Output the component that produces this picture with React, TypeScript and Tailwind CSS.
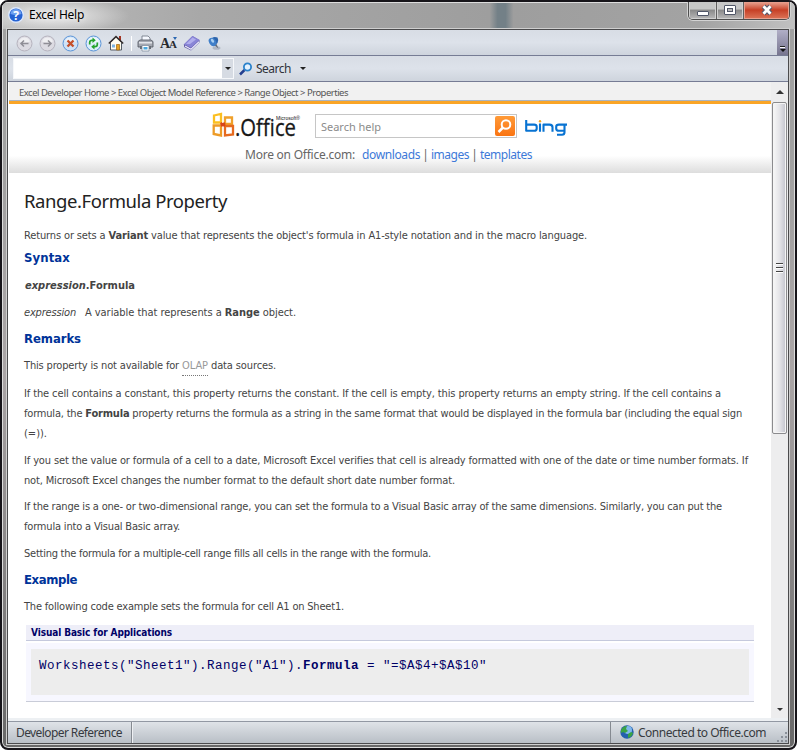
import { useLayoutEffect, useRef, useState, type ReactNode } from "react";

const tahoma = "font-['DejaVu_Sans_Condensed','DejaVu_Sans',sans-serif] [font-stretch:condensed]";
const segoe = "font-['Noto_Sans','Open_Sans',sans-serif]";

/** One line of text, tracked so that it fills exactly `w` pixels. */
function Fit({ w, children, className = "" }: { w: number; children: ReactNode; className?: string }) {
  const ref = useRef<HTMLSpanElement>(null);
  const [gap, setGap] = useState(0);
  useLayoutEffect(() => {
    const el = ref.current;
    if (!el) return;
    const n = (el.textContent ?? "").length;
    setGap((w - el.getBoundingClientRect().width) / n);
  }, [w]);
  return (
    <span ref={ref} className={`inline-block whitespace-pre ${className}`} style={{ letterSpacing: `${gap}px` }}>
      {children}
    </span>
  );
}

function Round({ fill, edge, children }: { fill: string; edge: string; children: ReactNode }) {
  return (
    <svg width="17" height="17" viewBox="0 0 17 17" className="shrink-0">
      <circle cx="8.5" cy="8.5" r="7.5" fill={fill} stroke={edge} />
      <path d="M3 6.5a5.8 5.8 0 0 1 11 0Q8.500 9 3 6.500Z" fill="#fff" opacity=".55" />
      {children}
    </svg>
  );
}

function ToolIcons() {
  return (
    <div className="flex items-center pt-px pl-[8px]">
      <div className="flex gap-[6px]">
        <Round fill="#dcdbe2" edge="#b5b2bd">
          <path d="M12.500 8.500H5M8 5.500l-3 3 3 3" fill="none" stroke="#8f8e96" strokeWidth="1.500" />
        </Round>
        <Round fill="#dcdbe2" edge="#b5b2bd">
          <path d="M4.500 8.500H12M9 5.500l3 3-3 3" fill="none" stroke="#8f8e96" strokeWidth="1.500" />
        </Round>
        <Round fill="#cfe2f7" edge="#5a93d6">
          <path d="M5.500 5.500l6 6M11.500 5.500l-6 6" stroke="#c4502c" strokeWidth="2.400" />
        </Round>
        <Round fill="#dceefb" edge="#5a93d6">
          <path d="M4.700 9.500V7.500Q4.700 5.300 7 5.300h1M12.300 7.500v2q0 2.200-2.300 2.200H9" fill="none" stroke="#25a32c" strokeWidth="1.700" />
          <path d="M7.500 2.500L10.800 5.300 7.500 8ZM9.500 9L6.200 11.700l3.300 2.800Z" fill="#25a32c" />
        </Round>
      </div>
      <svg width="16" height="16" viewBox="0 0 16 16" className="ml-[6px]">
        <path d="M11 1h2v5h-2z" fill="#a33322" />
        <path d="M2.500 7.500L8 2.200l5.500 5.300V15h-11z" fill="#fffdf1" stroke="#555d66" />
        <path d="M8.500 9.500h3V15h-3z" fill="#e7a423" stroke="#9d6412" strokeWidth=".7" />
        <path d="M4 9.500h3v3H4z" fill="#7cb4e4" />
        <path d="M.8 8.500L8 1.500l7.200 7" fill="none" stroke="#302b2b" strokeWidth="1.500" />
      </svg>
      <div className="ml-[7px] h-[15px] w-px bg-white" />
      <svg width="17" height="17" viewBox="0 0 17 17" className="ml-[5px]">
        <path d="M5 1h6l2 2v5H5z" fill="#f6f9ff" stroke="#69717e" strokeWidth=".8" />
        <path d="M1 6.500L3 5h11l2 1.500V12H1z" fill="#a5a9b2" stroke="#4b505a" strokeWidth=".8" />
        <path d="M2 7h13v1.500H2z" fill="#e3e5ea" />
        <path d="M3 11h11v3H3z" fill="#686d76" />
        <path d="M5 10.500h7V16H5z" fill="#fff" stroke="#778596" strokeWidth=".7" />
        <path d="M6.500 12h4v2.500h-4z" fill="#49a8df" />
      </svg>
      <div className="ml-[6px] flex h-[17px] w-[17px] items-baseline leading-[17px] font-bold text-[#282a2f]">
        <span className="w-[9px] font-['Liberation_Serif',serif] text-[14px] tracking-[-1px]">A</span>
        <span className="font-['Liberation_Serif',serif] text-[11px]">A</span>
        <div className="mt-[2px] -ml-[4px] self-start border-x-[2.5px] border-t-[3px] border-x-transparent border-t-[#2c68b2]" />
      </div>
      <svg width="17" height="17" viewBox="0 0 17 17" className="ml-[6px]">
        <path d="M1 9.500L9.500 1l7 4v2.500L8 15.500 1 12z" fill="#635caa" />
        <path d="M2 11l6 3.200 8-7.500" fill="none" stroke="#ecebfa" strokeWidth="1.200" />
        <path d="M1 9.300L9.500 1l7 4L8 12.800z" fill="#8985d6" />
        <path d="M3 9L9.500 2.500 13 4.500 7 9z" fill="#b1aeed" />
      </svg>
      <svg width="14" height="15" viewBox="0 0 14 15" className="ml-[7px]">
        <ellipse cx="9.500" cy="12" rx="4" ry="1.800" fill="#8b93a5" opacity=".5" />
        <path d="M7 9l4.500 3.500L9.500 8z" fill="#656c79" />
        <path d="M5 2Q7 .5 10.500 1.500 12 4 10.500 7L7 10z" fill="#2d65ad" />
        <ellipse cx="5.500" cy="6" rx="3.300" ry="4.500" fill="#407fc9" transform="rotate(-35 5.500 6)" />
        <ellipse cx="5.500" cy="4.800" rx="1.300" ry="2.200" fill="#abd0f1" transform="rotate(-35 5.500 4.800)" />
      </svg>
    </div>
  );
}

function OfficeLogo() {
  return (
    <div className="flex h-[28px] w-[88px]">
      <svg width="88" height="28" viewBox="0 0 88 28" className="overflow-visible">
        <g fill="none" strokeWidth="2.300">
          <path d="M2 3.500l7-1.500v8.500H2z" stroke="#fbbf20" />
          <path d="M13 5.500h7v6.500h-7z" stroke="#f0a02a" />
          <path d="M5 13.500H1.700v8.500l7.300 1.500v-10H5" stroke="#ed9b27" />
          <path d="M13 14h8v8.500l-8 1z" stroke="#e66a1f" />
          <path d="M8.500 11l4.500 3M9 14l4-3" stroke="#d84618" />
        </g>
        <text x="23" y="24" textLength="61" lengthAdjust="spacingAndGlyphs" fontFamily="Open Sans" fontSize="24" fill="#171717" stroke="#171717" strokeWidth=".3">.Office</text>
        <text x="64" y="7.500" textLength="24" lengthAdjust="spacingAndGlyphs" fontFamily="Liberation Sans" fontSize="6" fill="#111">Microsoft®</text>
      </svg>
    </div>
  );
}

function BingLogo() {
  return (
    <svg width="43" height="16" viewBox="0 0 43 16" className="mt-[4px] ml-[8px]">
      <g fill="none" stroke="#0873d2" strokeWidth="2.100" strokeLinejoin="round">
        <path d="M1.200 0v10.800h8q2.500 0 2.500-2.300V6.800Q11.700 4.600 9.200 4.600H2" />
        <path d="M15 3.500v8.300" />
        <path d="M18.500 11.800V4.600h6q3 0 3 2.600v4.600" />
        <path d="M42 4.600h-8q-2.800 0-2.800 2.200v1.700q0 2.300 2.800 2.300H39.500V4.800v7.500q0 2.500-2.500 2.500h-5" />
      </g>
      <circle cx="15" cy="1.300" r="1.200" fill="#f5a623" />
    </svg>
  );
}

function Thumb() {
  return (
    <div className="flex h-[332px] w-[15px] flex-col items-center justify-center gap-[2px] rounded-[2px] border border-[#8b8b8e] bg-linear-to-r from-[#f8f8f8] via-[#e4e4e8] to-[#c3c4cd] shadow-[inset_0_0_0_1px_#f5f5f5]">
      <div className="h-[2px] w-[7px] border-t border-[#444] bg-white" />
      <div className="h-[2px] w-[7px] border-t border-[#444] bg-white" />
      <div className="h-[2px] w-[7px] border-t border-[#444] bg-white" />
    </div>
  );
}

function TitleBar() {
  return (
    <div className="relative flex h-[27px] items-start bg-[radial-gradient(ellipse_75px_18px_at_52px_14px,#e2e2e2_20%,transparent_100%)]">
      <svg width="16" height="16" viewBox="0 0 16 16" className="mt-[5px] ml-[6px]">
        <circle cx="8" cy="8" r="7.300" fill="#2562d2" stroke="#dce7fa" strokeWidth="1.400" />
        <path d="M2.500 7a5.500 5 0 0 1 11 0Q8 9 2.500 7Z" fill="#6ea0f1" />
        <text x="8" y="12.500" textAnchor="middle" fontFamily="Open Sans" fontWeight="700" fontSize="12" fill="#fff">?</text>
      </svg>
      <div className={`${segoe} mt-[4px] ml-[5px] text-[12px] leading-[18px] text-black [text-shadow:0_0_7px_#fff]`}>
        <Fit w={55}>Excel Help</Fit>
      </div>
      <div className="absolute top-[-1px] right-[5px] flex h-[19px] w-[102px] overflow-hidden rounded-b-[5px] border border-t-0 border-[#4e4e4e] shadow-[0_0_0_1px_#d3d3d3]">
        <div className="flex w-[28px] items-center justify-center border-r border-[#606060] bg-linear-to-b from-[#c7c7c7] from-45% via-[#898989] via-50% to-[#b9b9b9] shadow-[inset_0_0_0_1px_#d0d0d0]">
          <div className="mt-[6px] h-[5px] w-[12px] rounded-[1px] border border-[#515768] bg-white" />
        </div>
        <div className="flex w-[27px] items-center justify-center border-r border-[#606060] bg-linear-to-b from-[#c7c7c7] from-45% via-[#898989] via-50% to-[#b9b9b9] shadow-[inset_0_0_0_1px_#d0d0d0]">
          <div className="flex h-[10px] w-[12px] items-center justify-center rounded-[1px] border border-[#515768] bg-white">
            <div className="h-[4px] w-[6px] border border-[#515768] bg-[#bbb]" />
          </div>
        </div>
        <div className="flex flex-1 items-center justify-center bg-linear-to-b from-[#e7a493] from-5% via-[#c63f25] via-50% to-[#dc7458] shadow-[inset_0_0_0_1px_#e7a18f]">
          <svg width="14" height="12" viewBox="0 0 14 12">
            <path d="M3.500 2.200l7 7.600M10.500 2.200l-7 7.600" stroke="#555b6e" strokeWidth="5" />
            <path d="M3.500 2.200l7 7.600M10.500 2.200l-7 7.600" stroke="#fff" strokeWidth="2.800" />
          </svg>
        </div>
      </div>
    </div>
  );
}

function Toolbar() {
  const bar = "bg-linear-to-b from-[#d8dde5] via-[#dde2ea] to-[#ced4dd] border-b border-[#767c94]";
  return (
    <>
      <div className={`flex h-[26px] justify-between ${bar}`}>
        <ToolIcons />
        <div className="flex w-[11px] flex-col items-center justify-end bg-linear-to-b from-[#b1afc7] to-[#77758f] pb-[3px]">
          <div className="h-[2px] w-[5px] border-b border-white bg-[#222]" />
          <div className="mt-px border-x-[3px] border-t-[3px] border-x-transparent border-t-[#111]" />
        </div>
      </div>
      <div className={`flex h-[26px] items-center pl-[5px] ${bar}`}>
        <div className="flex h-[21px] w-[221px] justify-end border border-[#f5f7fa] bg-white">
          <div className="flex w-[11px] items-center justify-center bg-[#d6dbe3]">
            <div className="border-x-[3px] border-t-[3px] border-x-transparent border-t-[#222]" />
          </div>
        </div>
        <svg width="14" height="14" viewBox="0 0 14 14" className="ml-[5px]">
          <path d="M5.500 8L1 12.500" stroke="#233f8f" strokeWidth="2.500" />
          <circle cx="8.500" cy="5" r="3.600" fill="#e4f2ff" stroke="#2b82cb" strokeWidth="1.800" />
        </svg>
        <div className={`${segoe} ml-[3px] text-[12px] leading-[18px] text-[#30333a]`}>
          <Fit w={35}>Search</Fit>
        </div>
        <div className="ml-[9px] border-x-[3px] border-t-[3px] border-x-transparent border-t-[#222]" />
      </div>
    </>
  );
}

function PageHeader() {
  return (
    <>
      <div className={`${segoe} flex h-[18px] items-center bg-[#f1f1f1] pt-[4px] pl-[10px] text-[9.500px] text-[#555]`}>
        <Fit w={329}>{"Excel Developer Home > Excel Object Model Reference > Range Object > Properties"}</Fit>
      </div>
      <div className="h-[4px] border-t border-[#a9b4c3] bg-[#faa526]" />
      <div className="h-[69px] bg-linear-to-b from-white from-75% to-[#dddddd] pt-[8px]">
        <div className="flex h-[28px] items-center pl-[203px]">
          <OfficeLogo />
          <div className="ml-[15px] flex h-[24px] w-[202px] items-center justify-between border border-[#c6c6c6] bg-white pr-px pl-[5px]">
            <span className={`${segoe} mt-[2px] text-[11px] text-[#8b8b8b]`}>
              <Fit w={60}>Search help</Fit>
            </span>
            <div className="flex h-[20px] w-[20px] items-center justify-center rounded-[2px] bg-linear-to-b from-[#ff9a36] to-[#fa7410]">
              <svg width="16" height="16" viewBox="0 0 16 16">
                <circle cx="9" cy="6.500" r="4.300" fill="none" stroke="#fff" strokeWidth="2" />
                <path d="M6 9.500L1.500 14" stroke="#fff" strokeWidth="2.500" />
              </svg>
            </div>
          </div>
          <BingLogo />
        </div>
        <div className={`${segoe} mt-[6px] flex pl-[236px] text-[12px] leading-[18px] text-[#666]`}>
          <Fit w={110}>More on Office.com:</Fit>
          <Fit w={58} className="ml-[7px] text-[#3d79d8]">downloads</Fit>
          <span className="w-[11px] text-center">|</span>
          <Fit w={38} className="text-[#3d79d8]">images</Fit>
          <span className="w-[11px] text-center">|</span>
          <Fit w={52} className="text-[#3d79d8]">templates</Fit>
        </div>
      </div>
    </>
  );
}

function Heading({ w, top, children }: { w: number; top: string; children: string }) {
  return (
    <h2 className={`${top} flex h-[20px] text-[13px] font-bold text-[#003399]`}>
      <Fit w={w}>{children}</Fit>
    </h2>
  );
}

function Article() {
  return (
    <div className={`${tahoma} pl-[15px] text-[11px] leading-[20px] text-[#444]`}>
      <h1 className={`${segoe} mt-[14px] flex h-[27px] text-[18.500px] leading-[27px] font-normal text-[#222]`}>
        <Fit w={203}>Range.Formula Property</Fit>
      </h1>
      <p className="mt-[12px] flex h-[20px]">
        <Fit w={563}>Returns or sets a <b>Variant</b> value that represents the object's formula in A1-style notation and in the macro language.</Fit>
      </p>
      <Heading w={46} top="mt-[2px]">Syntax</Heading>
      <p className="mt-[8px] flex h-[20px] pl-px font-bold">
        <Fit w={110}><i>expression</i>.Formula</Fit>
      </p>
      <p className="mt-[7px] flex h-[20px]">
        <Fit w={52} className="italic">expression</Fit>
        <Fit w={211} className="ml-[9px]">A variable that represents a <b>Range</b> object.</Fit>
      </p>
      <Heading w={57} top="mt-[6px]">Remarks</Heading>
      <p className="mt-[7px] flex h-[20px]">
        <Fit w={155}>This property is not available for</Fit>
        <Fit w={26} className="ml-[3px] border-b border-dotted border-[#777] text-[#999]">OLAP</Fit>
        <Fit w={65} className="ml-[3px]">data sources.</Fit>
      </p>
      <p className="mt-[8px] flex flex-col items-start">
        <Fit w={697}>If the cell contains a constant, this property returns the constant. If the cell is empty, this property returns an empty string. If the cell contains a</Fit>
        <Fit w={718}>formula, the <b>Formula</b> property returns the formula as a string in the same format that would be displayed in the formula bar (including the equal sign</Fit>
        <Fit w={23}>(=)).</Fit>
      </p>
      <p className="mt-[7px] flex flex-col items-start">
        <Fit w={724}>If you set the value or formula of a cell to a date, Microsoft Excel verifies that cell is already formatted with one of the date or time number formats. If</Fit>
        <Fit w={431}>not, Microsoft Excel changes the number format to the default short date number format.</Fit>
      </p>
      <p className="mt-[6px] flex flex-col items-start">
        <Fit w={698}>If the range is a one- or two-dimensional range, you can set the formula to a Visual Basic array of the same dimensions. Similarly, you can put the</Fit>
        <Fit w={156}>formula into a Visual Basic array.</Fit>
      </p>
      <p className="mt-[7px] flex h-[20px]">
        <Fit w={407}>Setting the formula for a multiple-cell range fills all cells in the range with the formula.</Fit>
      </p>
      <Heading w={53} top="mt-[6px]">Example</Heading>
      <p className="mt-[7px] flex h-[20px]">
        <Fit w={320}>The following code example sets the formula for cell A1 on Sheet1.</Fit>
      </p>
      <div className="mt-[8px] ml-[2px] w-[728px]">
        <div className="flex h-[16px] border-b border-[#c5c9dd] bg-[#eeeef8] pl-[5px] text-[10px] leading-[15px] font-bold text-[#000066]">
          <Fit w={141}>Visual Basic for Applications</Fit>
        </div>
        <div className="mt-[2px] h-[59px] border-b border-[#c9ccd8] bg-[#f7f7ff] px-[5px] pt-[6px]">
          <div className="h-[46px] bg-[#ededed] pt-[7px] pl-[8px] font-['Liberation_Mono',monospace] text-[12.500px] text-[#000066]">
            <Fit w={448}>Worksheets("Sheet1").Range("A1").<span className="font-bold">Formula</span> = "=$A$4+$A$10"</Fit>
          </div>
        </div>
      </div>
    </div>
  );
}

function StatusBar() {
  return (
    <div className={`${segoe} flex h-[22px] items-stretch border-t border-[#9298a3] bg-linear-to-b from-[#dfe3e8] to-[#b9bfc6] text-[12px] leading-[21px] text-[#373a40]`}>
      <div className="flex w-[124px] border-r border-[#858a91] pl-[8px] shadow-[1px_0_0_#eef0f3]">
        <Fit w={106}>Developer Reference</Fit>
      </div>
      <div className="flex-1" />
      <div className="flex w-[178px] border-l border-[#858a91] pl-[9px]">
        <svg width="14" height="14" viewBox="0 0 14 14" className="mt-[3px]">
          <circle cx="7" cy="7" r="6.700" fill="#2460ad" />
          <circle cx="8" cy="5" r="4" fill="#80b8ed" />
          <path d="M1 5Q3 1 7 1L6 4 8 6 5 8 3 7 1 8ZM8 9l3-2 2 1q-1 4-5 5Z" fill="#39a344" />
        </svg>
        <Fit w={128} className="ml-[4px]">Connected to Office.com</Fit>
        <svg width="11" height="11" viewBox="0 0 11 11" className="mt-auto ml-auto">
          <path d="M8 0h2v2H8zM4 4h2v2H4zM8 4h2v2H8zM0 8h2v2H0zM4 8h2v2H4zM8 8h2v2H8z" fill="#8a9099" />
        </svg>
      </div>
    </div>
  );
}

export default function App() {
  return (
    <div className="h-[751px] w-[797px] overflow-hidden bg-white">
      <div className="flex h-[750px] flex-col overflow-hidden rounded-[8px] border-2 border-[#17151a] bg-linear-to-b from-[#a1a1a1] from-20% via-[#aaa5a6] to-[#686868] shadow-[inset_0_0_0_1px_#ddd]">
        <div className="bg-[linear-gradient(90deg,#bdbdbd_0%,#a8a8a8_25%,#9e9e9e_61.500%,#738087_62.500%,#738087_63.500%,#9e9e9e_64.500%,#a3a3a3_88%,#c1c1c1_100%)] shadow-[inset_1px_1px_0_#ddd]">
          <TitleBar />
        </div>
        <div className="mr-[6px] ml-[5px] flex h-[715px] flex-col border border-[#4b4b4d] bg-white shadow-[0_0_0_1px_#cfcfcf]">
          <Toolbar />
          <div className="flex flex-1">
            <div className="w-[763px] overflow-hidden pl-px">
              <PageHeader />
              <Article />
            </div>
            <div className="flex flex-1 flex-col items-center bg-[#ededee]">
              <div className="flex h-[20px] items-center">
                <div className="border-x-[4px] border-b-[4px] border-x-transparent border-b-[#333]" />
              </div>
              <Thumb />
              <div className="mt-auto mb-[7px] border-x-[3px] border-t-[3px] border-x-transparent border-t-[#333]" />
            </div>
          </div>
          <div className="h-[3px] bg-[#edf0f3]" />
          <StatusBar />
        </div>
      </div>
    </div>
  );
}
